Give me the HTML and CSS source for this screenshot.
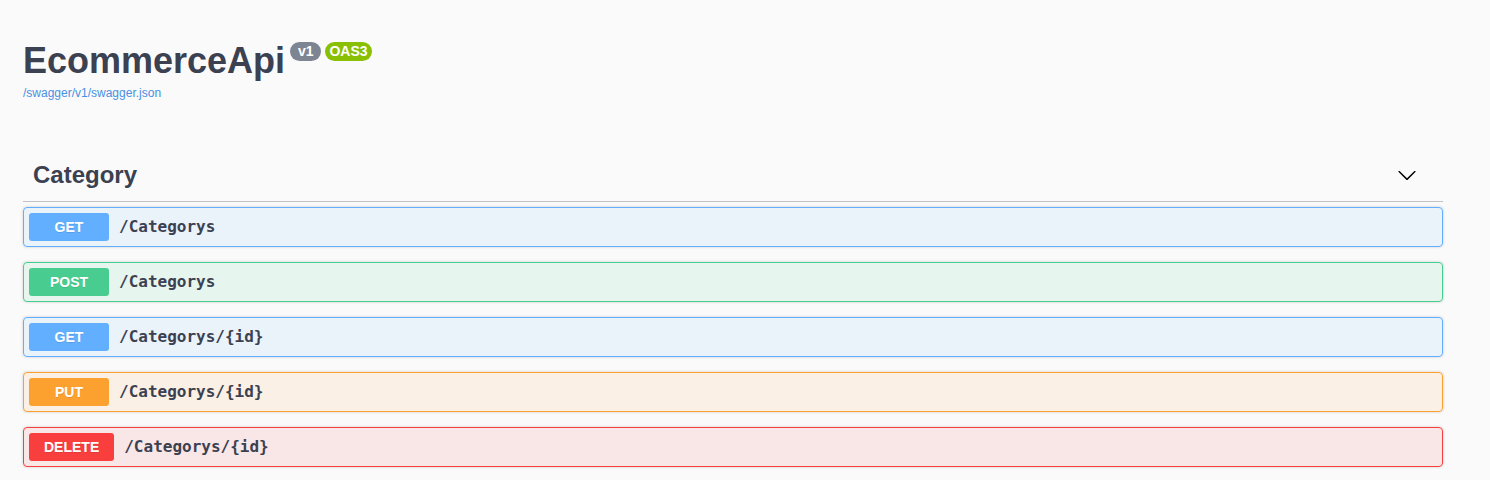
FILE: index.html
```html
<!DOCTYPE html>
<html>
<head>
<meta charset="utf-8">
<title>EcommerceApi</title>
<link rel="stylesheet" href="styles.css">
</head>
<body>
<div class="wrapper">
  <div class="info">
    <h2 class="title">EcommerceApi <span class="badge badge-version"><pre> v1 </pre></span><span class="badge badge-oas"><pre>OAS3</pre></span></h2>
    <a class="link" href="#">/swagger/v1/swagger.json</a>
  </div>

  <div class="tag-section">
    <div class="tag">
      <h3 class="tag-name">Category</h3>
      <button class="expand" type="button" aria-label="collapse">
        <svg width="20" height="20" viewBox="0 0 20 20"><path d="M17.418 6.109c.272-.268.709-.268.979 0s.271.701 0 .969l-7.908 7.830c-.27.268-.707.268-.979 0l-7.908-7.830c-.27-.268-.27-.701 0-.969.271-.268.709-.268.979 0L10 13.25l7.418-7.141z"/></svg>
      </button>
    </div>

    <div class="op op-get"><div class="summary"><span class="method">GET</span><span class="path">/Categorys</span></div></div>
    <div class="op op-post"><div class="summary"><span class="method">POST</span><span class="path">/Categorys</span></div></div>
    <div class="op op-get"><div class="summary"><span class="method">GET</span><span class="path">/Categorys/{id}</span></div></div>
    <div class="op op-put"><div class="summary"><span class="method">PUT</span><span class="path">/Categorys/{id}</span></div></div>
    <div class="op op-delete"><div class="summary"><span class="method">DELETE</span><span class="path">/Categorys/{id}</span></div></div>
  </div>
</div>
</body>
</html>
```
FILE: styles.css
```css
html, body {
  margin: 0;
  padding: 0;
  background: #fafafa;
}

body {
  font-family: "Liberation Sans", Arial, sans-serif;
  color: #3b4151;
}

.wrapper {
  width: 1420px;
  padding: 0 23px;
}

.info {
  padding-top: 40px;
  margin-bottom: 53px;
}

.title {
  margin: 0;
  font-size: 36px;
  font-weight: 700;
  line-height: 41px;
  color: #3b4151;
  display: flex;
  align-items: flex-start;
}

.badge {
  display: inline-block;
  margin: 2px 0 0 4px;
  padding: 2px 4px;
  border-radius: 57px;
  background: #7d8492;
  line-height: 0;
}

.badge-version {
  margin-left: 5px;
}

.badge pre {
  margin: 0;
  padding: 0;
  font-family: "Liberation Sans", Arial, sans-serif;
  font-size: 14px;
  font-weight: 700;
  line-height: 15px;
  color: #fff;
}

.badge-oas {
  background: #89bf04;
}

.link {
  display: block;
  margin-top: 5px;
  font-size: 12px;
  line-height: 14px;
  color: #4990e2;
  text-decoration: none;
}

.tag {
  display: flex;
  align-items: center;
  padding: 8px 20px 12px 10px;
  margin: 0 0 5px;
  border-bottom: 1px solid rgba(59, 65, 81, 0.3);
}

.tag-name {
  flex: 1;
  margin: 0;
  font-size: 24px;
  font-weight: 700;
  line-height: 28px;
  color: #3b4151;
}

.expand {
  border: none;
  background: none;
  padding: 0;
  margin-right: 6px;
  width: 20px;
  height: 20px;
  display: flex;
}

.expand svg {
  fill: #000;
}

.op {
  margin: 0 0 15px;
  border: 1px solid #000;
  border-radius: 4px;
  box-shadow: 0 0 3px rgba(0, 0, 0, 0.19);
}

.summary {
  display: flex;
  align-items: center;
  padding: 5px;
}

.method {
  box-sizing: border-box;
  min-width: 80px;
  padding: 6px 15px;
  border-radius: 3px;
  font-size: 14px;
  line-height: 16px;
  font-weight: 700;
  text-align: center;
  color: #fff;
  text-shadow: 0 1px 0 rgba(0, 0, 0, 0.1);
}

.path {
  padding: 0 10px;
  font-family: "DejaVu Sans Mono", monospace;
  font-size: 16px;
  font-weight: 700;
  line-height: 18px;
  margin-top: -1px;
  color: #3b4151;
}

.op-get { border-color: #61affe; background: rgba(97, 175, 254, 0.1); }
.op-get .method { background: #61affe; }

.op-post { border-color: #49cc90; background: rgba(73, 204, 144, 0.1); }
.op-post .method { background: #49cc90; }

.op-put { border-color: #fca130; background: rgba(252, 161, 48, 0.1); }
.op-put .method { background: #fca130; }

.op-delete { border-color: #f93e3e; background: rgba(249, 62, 62, 0.1); }
.op-delete .method { background: #f93e3e; }
```
